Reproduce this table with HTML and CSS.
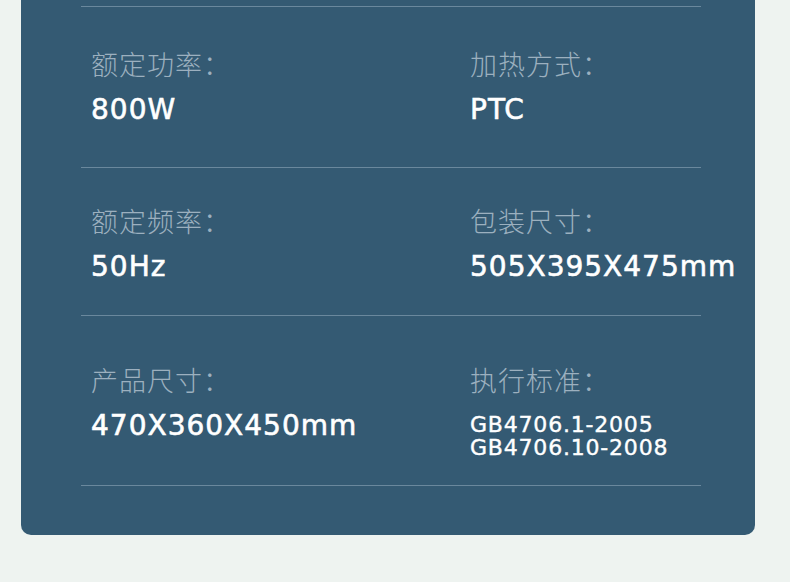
FILE: index.html
```html
<!DOCTYPE html>
<html lang="zh">
<head>
<meta charset="utf-8">
<link rel="stylesheet" href="styles.css">
</head>
<body>
<div class="card">
  <div class="row row-1">
    <div class="cell">
      <div class="label">额定功率：</div>
      <div class="value">800W</div>
    </div>
    <div class="cell">
      <div class="label">加热方式：</div>
      <div class="value">PTC</div>
    </div>
  </div>
  <div class="row row-2">
    <div class="cell">
      <div class="label">额定频率：</div>
      <div class="value">50Hz</div>
    </div>
    <div class="cell">
      <div class="label">包装尺寸：</div>
      <div class="value">505X395X475mm</div>
    </div>
  </div>
  <div class="row row-3">
    <div class="cell">
      <div class="label">产品尺寸：</div>
      <div class="value">470X360X450mm</div>
    </div>
    <div class="cell">
      <div class="label">执行标准：</div>
      <div class="value-small">
        <div class="std">GB4706.1-2005</div>
        <div class="std">GB4706.10-2008</div>
      </div>
    </div>
  </div>
</div>
</body>
</html>
```

FILE: styles.css
```css
html, body {
  margin: 0;
  padding: 0;
}
body {
  background: #eef3f0;
  width: 790px;
  height: 582px;
  overflow: hidden;
}
.card {
  margin-left: 21px;
  width: 734px;
  background: #345a73;
  border-radius: 0 0 10px 10px;
  padding: 6px 54px 49px 60px;
  box-sizing: border-box;
}
.row {
  display: grid;
  grid-template-columns: 379px 1fr;
  width: 620px;
  padding-left: 10px;
  box-sizing: border-box;
  border-top: 1px solid #6a889d;
}
.row-3 {
  border-bottom: 1px solid #6a889d;
}
.row-1 { padding-top: 40px; padding-bottom: 39px; }
.row-2 { padding-top: 36px; padding-bottom: 30px; }
.row-3 { padding-top: 47px; padding-bottom: 26px; }
.cell {
  display: flex;
  flex-direction: column;
  gap: 11px;
  white-space: nowrap;
}
.label {
  font-family: "Noto Sans CJK SC", "Noto Sans", sans-serif;
  font-size: 27px;
  line-height: 34px;
  letter-spacing: 1px;
  color: #9cb0bf;
  font-weight: 300;
}
.value {
  font-family: "DejaVu Sans", sans-serif;
  font-size: 28px;
  line-height: 36px;
  letter-spacing: 1px;
  color: #ffffff;
  -webkit-text-stroke: 0.6px #ffffff;
}
.value-small {
  font-family: "DejaVu Sans", sans-serif;
  font-size: 22px;
  color: #ffffff;
  margin-top: 5px;
  letter-spacing: 0.8px;
  -webkit-text-stroke: 0.4px #ffffff;
}
.std {
  line-height: 23px;
}
```
